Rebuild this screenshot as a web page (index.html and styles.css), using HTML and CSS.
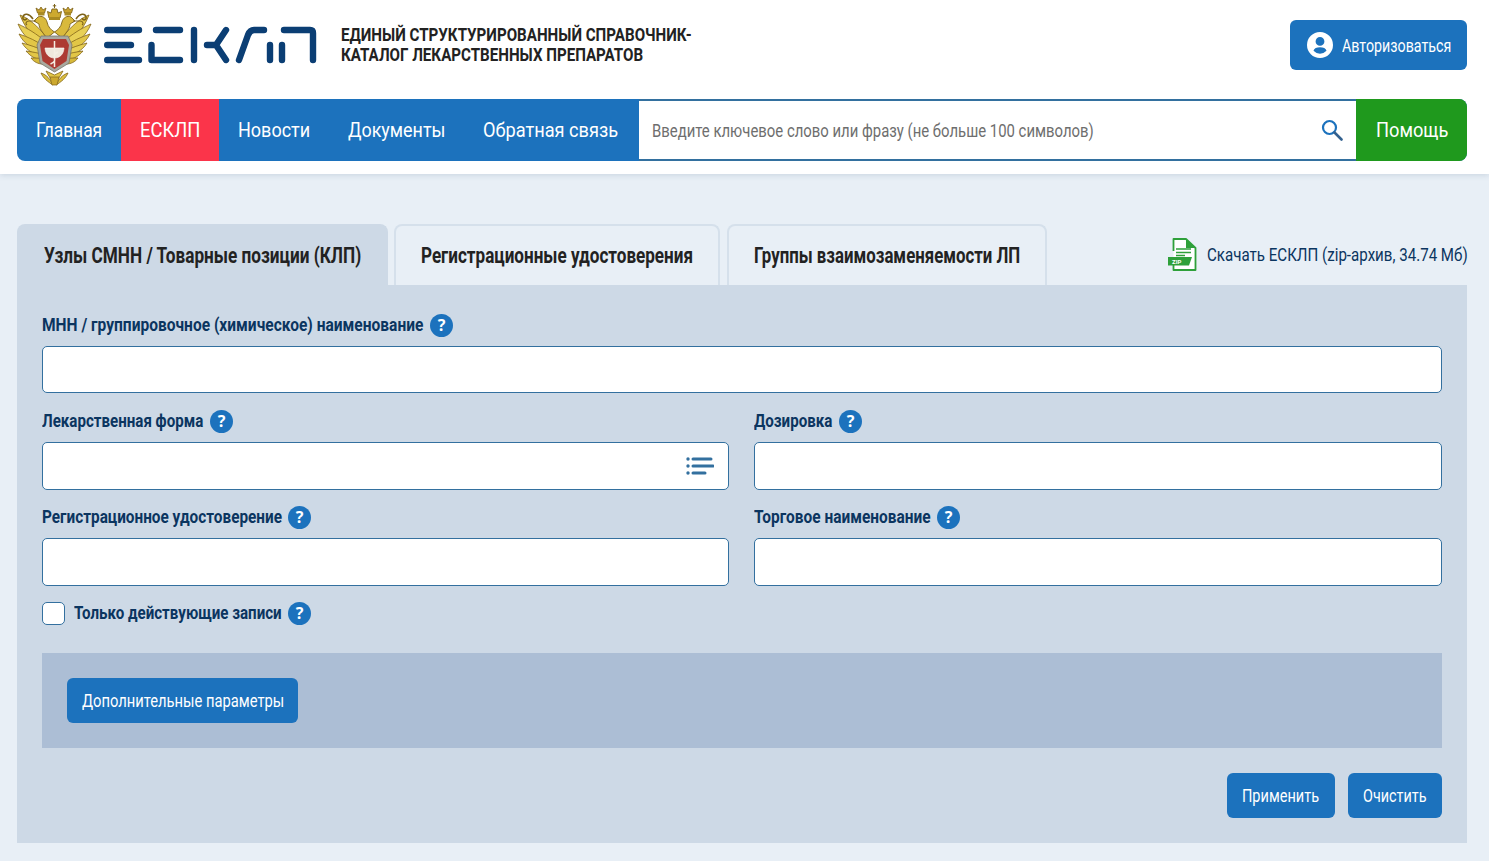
FILE: index.html
```html
<!DOCTYPE html>
<html lang="ru">
<head>
<meta charset="utf-8">
<title>ЕСКЛП</title>
<link rel="stylesheet" href="styles.css">
</head>
<body>
<header class="site-header">
  <div class="top-row">
    <a class="brand">
      <svg class="emblem" viewBox="0 0 75 82" width="75" height="82">
        <defs>
          <g id="wing">
            <path d="M27 40 C16 34 8 24 3 11 C11 14 21 22 30 34 Z" fill="#e2c646" stroke="#84661a" stroke-width=".8"/>
            <path d="M27 44 C15 40 6 32 1 20 C10 24 20 30 29 38 Z" fill="#e8d055" stroke="#84661a" stroke-width=".8"/>
            <path d="M27 48 C16 46 7 40 2 30 C11 33 20 37 28 43 Z" fill="#e2c646" stroke="#84661a" stroke-width=".8"/>
            <path d="M27 52 C18 51 10 47 5 39 C13 41 21 44 28 47 Z" fill="#e8d055" stroke="#84661a" stroke-width=".8"/>
            <path d="M27 56 C20 56 14 53 9 47 C16 48 22 49 28 51 Z" fill="#e2c646" stroke="#84661a" stroke-width=".8"/>
            <path d="M26 60 C21 60 17 58 14 54 C19 54 23 54 27 55 Z" fill="#d7b93a" stroke="#84661a" stroke-width=".8"/>
            <path d="M16 15 C12 9 7 9 6 13 C5 16 9 17 10 14" fill="none" stroke="#7d621a" stroke-width="1.600"/>
            <path d="M30 34 C25 28 22 24 22 20 L17 17 L21 13 C25 11 29 14 30 18 C31 23 34 26 37.500 28 Z" fill="#d9b93c" stroke="#7d621a" stroke-width=".9"/>
            <path d="M20.500 9 L19 4 L22 6 L24 3 L26 6 L29 4 L27.500 9 Z" fill="#c9a22c" stroke="#7d621a" stroke-width=".8"/>
            <path d="M19 17 H12 C9 17 8 20 10 21" fill="none" stroke="#7d621a" stroke-width="1.200"/>
            <rect x="21" y="9" width="6.500" height="2.500" fill="#a98a22"/>
          </g>
        </defs>
        <use href="#wing"/>
        <use href="#wing" transform="matrix(-1 0 0 1 75 0)"/>
        <path d="M37.500 0 V4 M35.800 1.800 H39.200" stroke="#7d621a" stroke-width="1"/>
        <path d="M32 14 L30.500 7.500 L34 9 L35 5 H40 L41 9 L44.500 7.500 L43 14 Z" fill="#cda92f" stroke="#7d621a" stroke-width=".9"/>
        <rect x="32" y="13" width="11" height="3" fill="#a98a22"/>
        <path d="M20 41 L24 32 H51 L55 41 L52 59 L37.500 68 L23 59 Z" fill="#a9a99f" stroke="#77776f" stroke-width=".8"/>
        <path d="M23 41 L26 35 H49 L52 41 L49.500 57 L37.500 65 L25.500 57 Z" fill="#ad3b33"/>
        <path d="M28 44 H47 C46.500 51 42 54 37.500 54 C33 54 28.500 51 28 44 Z" fill="#efe8dc" stroke="#fff" stroke-width=".6"/>
        <path d="M37.500 37 V63 M33.500 60 C43 56 32 52 41 48" stroke="#f4eee3" stroke-width="1.500" fill="none"/>
        <path d="M24 69 C26 74 31 78 36 81 C33 75 30 71 24 69 Z M51 69 C49 74 44 78 39 81 C42 75 45 71 51 69 Z" fill="#dcbf40" stroke="#84661a" stroke-width=".8"/>
        <path d="M29 67 C31 71 34 75 37.500 80 C41 75 44 71 46 67 L37.500 71 Z" fill="#e2c646" stroke="#84661a" stroke-width=".8"/>
        <path d="M33 73 H42 L40 81 H35 Z" fill="#cda92f" stroke="#84661a" stroke-width=".7"/>
      </svg>
      <svg class="wordmark" viewBox="0 0 213 38" width="213" height="38">
        <g fill="none" stroke="#0b3e74" stroke-width="6.400" stroke-linecap="round" stroke-linejoin="round">
          <path d="M3.200 4 H35 M3.200 19 H27 M3.200 34 H35"/>
          <path d="M52 4 H76 M47.500 19 V34 H76"/>
          <path d="M90 4 V34 M103 19 H112 L122 4 M112 19 L122 34"/>
          <path d="M135 34 L144 9 Q146 4 150 4 H160 M166 19 V34"/>
          <path d="M178 19 V34 M180 4 H206 Q209 4 209 7 V34"/>
        </g>
      </svg>
      <span class="sq brand-text">ЕДИНЫЙ СТРУКТУРИРОВАННЫЙ СПРАВОЧНИК-<br>КАТАЛОГ ЛЕКАРСТВЕННЫХ ПРЕПАРАТОВ</span>
    </a>
    <button class="login-btn">
      <svg viewBox="0 0 26 26" width="26" height="26"><path fill="#fff" fill-rule="evenodd" d="M13 0a13 13 0 1 0 0 26a13 13 0 0 0 0-26Z M13 5a4.400 4.400 0 1 1 0 8.800a4.400 4.400 0 0 1 0-8.800Z M13 15.300c3.300 0 6 1.100 6.500 3.500a8.800 8.800 0 0 1-13 0c.5-2.400 3.200-3.500 6.500-3.500Z"/></svg>
      <span class="sq t-login">Авторизоваться</span>
    </button>
  </div>
  <nav class="main-nav">
    <a class="nav-item"><span class="sq t-nav1">Главная</span></a>
    <a class="nav-item nav-active"><span class="sq t-nav2">ЕСКЛП</span></a>
    <a class="nav-item"><span class="sq t-nav3">Новости</span></a>
    <a class="nav-item"><span class="sq t-nav4">Документы</span></a>
    <a class="nav-item"><span class="sq t-nav5">Обратная связь</span></a>
    <div class="search">
      <span class="sq t-search">Введите ключевое слово или фразу (не больше 100 символов)</span>
      <svg viewBox="0 0 22 22" width="22" height="22"><circle cx="8.500" cy="8.500" r="6.500" fill="none" stroke="#1c72bd" stroke-width="2.200"/><path d="M13.500 13.500 L20.500 20.500" stroke="#33618f" stroke-width="2.600" stroke-linecap="round"/></svg>
    </div>
    <a class="help"><span class="sq t-help">Помощь</span></a>
  </nav>
</header>
<main class="content">
  <div class="tabs-row">
    <div class="tab tab-active"><span class="sq t-tab1">Узлы СМНН / Товарные позиции (КЛП)</span></div>
    <div class="tab tab-2"><span class="sq t-tab2">Регистрационные удостоверения</span></div>
    <div class="tab tab-3"><span class="sq t-tab3">Группы взаимозаменяемости ЛП</span></div>
    <a class="download">
      <svg viewBox="0 0 30 33" width="30" height="33">
        <path d="M5.500 13 V1 H18 L27.500 10 V32 H5.500 V27" fill="#fff" stroke="#2ea03a" stroke-width="1.800" stroke-linejoin="round"/>
        <path d="M18 1 V10 H27.500 Z" fill="#2ea03a"/>
        <path d="M8 11 H23 M8 14.500 H23 M8 17.500 H17" stroke="#2ea03a" stroke-width="1.300"/>
        <path d="M0 19 H24 L21 27.500 H0 Z" fill="#2ea03a"/>
        <text class="zip-label" x="4" y="25.800">ZIP</text>
      </svg>
      <span class="sq t-download">Скачать ЕСКЛП (zip-архив, 34.74 Мб)</span>
    </a>
  </div>
  <section class="panel">
    <div class="field field-first">
      <div class="label"><span class="sq t-l1">МНН / группировочное (химическое) наименование</span><i class="hint">?</i></div>
      <div class="input input-first"></div>
    </div>
    <div class="grid">
      <div class="field">
        <div class="label"><span class="sq t-l2">Лекарственная форма</span><i class="hint">?</i></div>
        <div class="input input-list">
          <svg viewBox="0 0 28 20" width="28" height="20"><g stroke="#33709f" stroke-width="3" stroke-linecap="round"><path d="M7 3 H25 M7 10 H27 M7 17 H19"/></g><g fill="#33709f"><circle cx="2" cy="3" r="1.700"/><circle cx="2" cy="10" r="1.700"/><circle cx="2" cy="17" r="1.700"/></g></svg>
        </div>
      </div>
      <div class="field">
        <div class="label"><span class="sq t-l3">Дозировка</span><i class="hint">?</i></div>
        <div class="input"></div>
      </div>
      <div class="field">
        <div class="label"><span class="sq t-l4">Регистрационное удостоверение</span><i class="hint">?</i></div>
        <div class="input"></div>
      </div>
      <div class="field">
        <div class="label"><span class="sq t-l5">Торговое наименование</span><i class="hint">?</i></div>
        <div class="input"></div>
      </div>
    </div>
    <div class="check-row">
      <span class="checkbox"></span>
      <span class="sq t-check">Только действующие записи</span><i class="hint">?</i>
    </div>
    <div class="extra">
      <button class="btn"><span class="sq t-extra">Дополнительные параметры</span></button>
    </div>
    <div class="actions">
      <button class="btn"><span class="sq t-apply">Применить</span></button>
      <button class="btn"><span class="sq t-clear">Очистить</span></button>
    </div>
  </section>
</main>
</body>
</html>
```
FILE: styles.css
```css
* { box-sizing: border-box; }
html, body { margin: 0; padding: 0; }
body {
  background: #e8eff6;
  font-family: Roboto, "Noto Sans", sans-serif;
  color: #0b3560;
  height: 861px;
  overflow: hidden;
}
a { display: flex; }

/* The reference face is a narrow one: each text keeps the reference width in flow and is squeezed to fit it. */
.sq {
  display: block;
  flex: none;
  white-space: nowrap;
  transform-origin: 0 50%;
  transform: scaleX(var(--sx));
  text-align: left;
}
.t-login { width: 110px; --sx: .75; }
.t-nav1 { width: 66px; --sx: .87; }
.t-nav2 { width: 60px; --sx: .92; }
.t-nav3 { width: 72px; --sx: .9; }
.t-nav4 { width: 97px; --sx: .895; }
.t-nav5 { width: 137px; --sx: .91; }
.t-help { width: 72px; --sx: .912; }
.t-search { width: 443px; --sx: .8275; }
.t-tab1 { width: 317px; --sx: .781; }
.t-tab2 { width: 272px; --sx: .776; }
.t-tab3 { width: 266px; --sx: .764; }
.t-download { width: 260px; --sx: .839; }
.t-l1 { width: 382px; --sx: .84; }
.t-l2 { width: 162px; --sx: .817; }
.t-l3 { width: 79px; --sx: .818; }
.t-l4 { width: 240px; --sx: .829; }
.t-l5 { width: 177px; --sx: .836; }
.t-check { width: 208px; --sx: .817; }
.t-extra { width: 201px; --sx: .775; }
.t-apply { width: 78px; --sx: .765; }
.t-clear { width: 64px; --sx: .758; }

.site-header {
  background: #fff;
  height: 174px;
  padding: 0 22px 0 17px;
  box-shadow: 0 1px 6px rgba(60, 90, 120, .18);
}
.top-row {
  height: 99px;
  display: flex;
  align-items: flex-start;
  justify-content: space-between;
}
.brand { align-items: flex-start; }
.emblem { margin-top: 4px; flex: none; }
.wordmark { margin: 26px 0 0 12px; flex: none; }
.brand-text {
  --sx: .796;
  width: 351px;
  margin: 25px 0 0 24px;
  font-size: 19px;
  line-height: 20px;
  font-weight: 700;
  color: #222;
}
.login-btn {
  margin-top: 20px;
  height: 50px;
  width: 177px;
  border: 0;
  border-radius: 6px;
  background: #1c72bd;
  color: #fff;
  font: 400 19px Roboto, sans-serif;
  display: flex;
  align-items: center;
  gap: 9px;
  padding: 0 0 0 17px;
}
.login-btn svg { flex: none; }
.main-nav {
  display: flex;
  height: 62px;
  background: #1c72bd;
  border-radius: 8px;
  overflow: hidden;
}
.nav-item {
  align-items: center;
  padding: 0 19px;
  color: #fff;
  font-size: 20px;
}
.nav-active { background: #fb344a; }
.search {
  flex: 1;
  background: #fff;
  border: solid #33709f;
  border-width: 2px 0;
  display: flex;
  align-items: center;
  justify-content: space-between;
  padding: 0 13px;
}
.t-search { color: #6e6e6e; font-size: 18px; }
.help {
  width: 111px;
  background: #1f991d;
  color: #fff;
  align-items: center;
  justify-content: center;
  font-size: 20px;
}
.content { padding: 50px 22px 0 17px; }
.tabs-row { display: flex; height: 61px; }
.tab {
  height: 61px;
  display: flex;
  align-items: center;
  font-size: 22px;
  font-weight: 700;
  color: #222;
  padding: 0 25px;
  border-radius: 8px 8px 0 0;
  border: 2px solid #d5e0eb;
  border-bottom: 0;
  margin-right: 7px;
  background: #e8eff6;
}
.tab-active { background: #cdd9e6; border-color: #cdd9e6; margin-right: 6px; }
.download {
  margin-left: auto;
  align-self: center;
  align-items: center;
  gap: 9px;
  font-size: 18px;
  color: #0b3560;
}
.download svg { flex: none; }
.zip-label { font: 700 6px Roboto, sans-serif; fill: #fff; }
.panel {
  background: #cdd9e6;
  height: 558px;
  padding: 28px 25px 0;
}
.label {
  display: flex;
  align-items: center;
  gap: 6px;
  height: 24px;
  margin-bottom: 9px;
  font-size: 18.500px;
  font-weight: 700;
  color: #0b3560;
}
.hint {
  width: 23px;
  height: 23px;
  border-radius: 50%;
  background: #1c72bd;
  color: #fff;
  font: 700 16px/23px "Noto Sans", sans-serif;
  text-align: center;
  flex: none;
}
.input {
  height: 48px;
  background: #fff;
  border: 1px solid #33709f;
  border-radius: 5px;
}
.input-first { height: 47px; }
.field { margin-bottom: 15px; }
.field-first { margin-bottom: 16px; }
.input-list { display: flex; align-items: center; justify-content: flex-end; padding-right: 14px; }
.grid { display: grid; grid-template-columns: 687px 688px; column-gap: 25px; }
.check-row {
  display: flex;
  align-items: center;
  height: 24px;
  font-size: 18.500px;
  font-weight: 700;
  gap: 6px;
}
.checkbox {
  width: 23px;
  height: 23px;
  background: #fff;
  border: 1px solid #33709f;
  border-radius: 5px;
  margin-right: 3px;
  flex: none;
}
.extra {
  margin-top: 28px;
  height: 95px;
  background: #acbed5;
  padding: 25px;
}
.btn {
  height: 45px;
  border: 0;
  border-radius: 6px;
  background: #1c72bd;
  color: #fff;
  font: 400 19px Roboto, sans-serif;
  padding: 0 15px;
}
.actions { display: flex; justify-content: flex-end; gap: 13px; margin-top: 25px; }
```
